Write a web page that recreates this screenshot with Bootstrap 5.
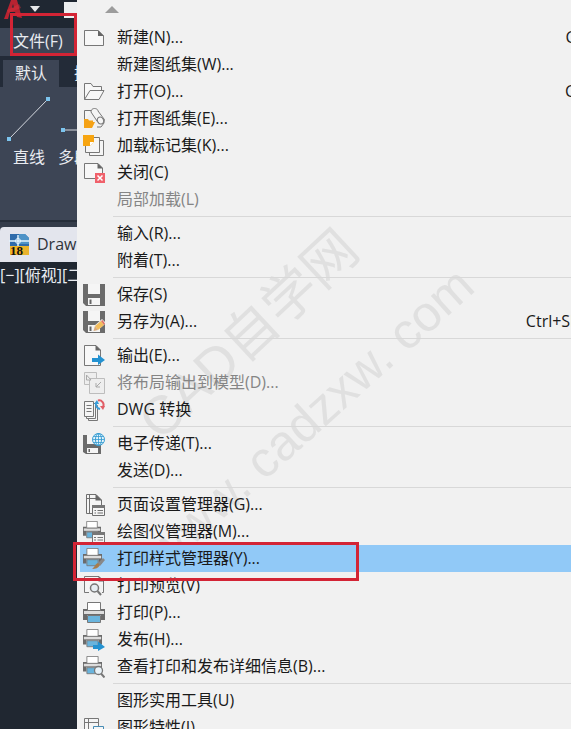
<!DOCTYPE html>
<html lang="zh-CN">
<head>
<meta charset="utf-8">
<meta name="viewport" content="width=device-width, initial-scale=1">
<title>Drawing</title>
<link href="https://cdn.jsdelivr.net/npm/bootstrap@5.3.0/dist/css/bootstrap.min.css" rel="stylesheet">
<style>
body{font-family:"Open Sans","Noto Sans CJK SC",sans-serif;font-size:16px;line-height:27px;background:#202731;color:#e8ebf0}
.cad-side{width:77px}
.cad-title{height:28px;background:#1f2732;padding-left:4px}
.cad-menubar{height:28px;background:#3c4555}
.cad-menubar button,.cad-tabs button,.cad-tool{border:0;background:none;color:inherit;padding:0}
.cad-menubar button{padding-left:13px;line-height:26px}
.mark-box{position:absolute;border:3px solid #d32435;pointer-events:none}
.mark-file{left:10px;right:0;top:-15px;bottom:0}
.mark-row{left:-7px;top:-3px;width:286px;height:39px}
.cad-tabs{height:31px;background:#232b38;padding:4px 0 0 3px}
.cad-tabs .tab-on{background:#3d4555;padding:0 12px;width:57px}
.cad-tabs .tab-off{padding-left:15px}
.cad-ribbon{height:135px;background:#3d4555;border-bottom:2px solid #262e3a}
.cad-tool{width:58px;line-height:24px}
.cad-tool svg{height:58px}
.cad-docs{height:40px;background:#343c4a;padding-top:5px}
.cad-doc{background:#e3e5ed;color:#30343b;border:0;border-radius:4px 0 0 0;padding:0 0 0 9px;gap:7px;width:120px}
.cad-menu{background:#f1f1f1;min-width:0}
.cad-list{margin:0 -42px 0 3px;position:relative}
.cad-arrow{height:24px;padding:6px 0 0 25px}
.cad-list .dropdown-item{height:27px;padding:0 0 0 3px;gap:12px;color:#1a1a1a;line-height:27px}
.cad-list .dropdown-item:disabled{color:#858585}
.cad-list .picked{background:#91c9f7}
.cad-list .dropdown-divider{margin:3px 0 3px 33px;border-top:1px solid #d8d8d8;opacity:1}
.cad-ico{width:22px;height:22px;flex:none}
.cad-water{position:absolute;left:0;top:0;width:100%;height:100%;pointer-events:none}
</style>
</head>
<body class="vh-100 overflow-hidden">
<svg class="d-none" aria-hidden="true">
<defs>
<symbol id="i-new" viewBox="0 0 22 22"><path d="M1.500 3.500H15L20.500 9V18.500H1.500Z" fill="#f7f7f7" stroke="#777"/><path d="M15 3L21 9H15Z" fill="#666"/></symbol>
<symbol id="i-open" viewBox="0 0 22 22" fill="#f7f7f7" stroke="#777"><path d="M1.500 18.500V2.500H8L10 5.500H18.500V9"/><path d="M1.500 18.500L7 9.500H21L16 18.500Z"/></symbol>
<symbol id="i-sheet" viewBox="0 0 22 22" fill="#f5f5f5" stroke="#777"><path d="M1.500 12V2.500H9M14 19H18L21 15V11"/><path d="M8 4C8-1 15 0 15 3L21 11C22 15 16 17 14 13Z"/><ellipse cx="17.500" cy="12.500" rx="3" ry="3.500" transform="rotate(-25 17.500 12.500)"/><path d="M1 19V11H5L6 12.500H10V14H12L9 20H1Z" fill="#f5a216" stroke="none"/></symbol>
<symbol id="i-markup" viewBox="0 0 22 22" fill="#f5f5f5" stroke="#777"><path d="M6.500 5.500H20.500V20.500H6.500Z"/><path d="M2.500 2.500H16.500V17.500H2.500Z"/><path d="M0 0H11V7L7 11H0Z" fill="#f7a511" stroke="none"/><path d="M11 7H7V11Z" fill="#fff" stroke="none"/></symbol>
<symbol id="i-close" viewBox="0 0 22 22"><path d="M1.500 1.500H15L19.500 6V16.500H1.500Z" fill="#f7f7f7" stroke="#777"/><path d="M14.500 1L20 6.500H14.500Z" fill="#666"/><path d="M12 11H22V21H12Z" fill="#f0616b"/><path d="M14.500 13.500L19.500 18.500M19.500 13.500L14.500 18.500" stroke="#fff" stroke-width="1.500"/></symbol>
<symbol id="i-save" viewBox="0 0 22 22"><path d="M0 0H22V22H3L0 19Z" fill="#6b6b6b"/><path d="M5 0H17V10H5Z" fill="#f5f5f5"/><path d="M5 14H17V21H5Z" fill="#f5f5f5"/><path d="M6.500 15.500H8.500V20H6.500Z" fill="#666"/></symbol>
<symbol id="i-saveas" viewBox="0 0 22 22"><use href="#i-save"/><path d="M9 21L11 15L19 8L23 12L15 19Z" fill="#f1f1f1"/><path d="M12 15L18 10L21 14L15 19Z" fill="#f3bd5c"/><path d="M18 10L19.500 9L22 12.500L21 14Z" fill="#df7165"/><path d="M12 15L10.500 20L15 19Z" fill="#d9aa79"/></symbol>
<symbol id="i-export" viewBox="0 0 22 22"><path d="M1.500 .5H13L17.500 5V20.500H1.500Z" fill="#f8f8f8" stroke="#777"/><path d="M12.500 0L18 5.500H12.500Z" fill="#666"/><path d="M9 13H15V9.500L22 15L15 20V17H9Z" fill="#2492d1"/></symbol>
<symbol id="i-layout" viewBox="0 0 22 22" fill="#eee" stroke="#bdbdbd"><path d="M1.500 .5H13.500V12.500H1.500Z"/><path d="M6.500 6.500H21.500V21.500H6.500Z"/><path d="M3.500 3V8H8ZM18 10L13 15V11M13 15H17" stroke="#a9a9a9"/></symbol>
<symbol id="i-dwg" viewBox="0 0 22 22" fill="#f5f5f5" stroke="#777"><path d="M5.500 6.500H14.500V21.500H5.500Z"/><path d="M3.500 4.500H12.500V19.500H3.500Z"/><path d="M1.500 2.500H10.500V17.500H1.500Z"/><path d="M3.500 6.500H8.500M3.500 9.500H8.500M3.500 12.500H8.500"/><path d="M13 4A5 5 0 0 0 17 10" fill="none" stroke="#3a9cd8" stroke-width="2"/><path d="M15 1.500A4.500 4.500 0 0 1 20 8" fill="none" stroke="#e15d65" stroke-width="2"/><path d="M11 5L14 1L16 5Z" fill="#3a9cd8" stroke="none"/><path d="M17 7H22L20 11Z" fill="#e15d65" stroke="none"/></symbol>
<symbol id="i-etrans" viewBox="0 0 22 22"><path d="M0 2H18V21H3L0 19Z" fill="#6b6b6b"/><path d="M4 2H14V11H4ZM4 15H15V20H4Z" fill="#f5f5f5"/><path d="M5.500 16H7V19H5.500Z" fill="#666"/><circle cx="15.500" cy="6.500" r="6" fill="#e5f4fc" stroke="#349bd0"/><path d="M9.500 6.500H21.500M11 3.500H20M11 9.500H20M15.500 .5V12.500" stroke="#349bd0" stroke-width=".8"/><ellipse cx="15.500" cy="6.500" rx="3" ry="6" fill="none" stroke="#349bd0"/></symbol>
<symbol id="i-page" viewBox="0 0 22 22" fill="#f5f5f5" stroke="#6f6f6f"><path d="M3.500 .5H13L18.500 6V19.500H3.500Z"/><path d="M6.500 1V19M4 4.500H14"/><path d="M12.500 0L19 6.500H12.500Z" fill="#666" stroke="none"/><path d="M9.500 11.500H21.500V21.500H9.500Z"/><path d="M9 11H22V14H9Z" fill="#777" stroke="none"/><path d="M11.500 16.500H13M14.500 16.500H20M11.500 19H13M14.500 19H20"/></symbol>
<symbol id="i-printer" viewBox="0 0 22 22"><path d="M0 7H22V18H18V13H4V18H0Z" fill="#6b6b6b"/><path d="M1 9H21V12H1Z" fill="#ddd"/><path d="M4.500 .5H17.500V8.500H4.500Z" fill="#fff" stroke="#777"/><path d="M4.500 13.500H17.500V20.500H4.500Z" fill="#69b4dd" stroke="#777"/></symbol>
<symbol id="i-plotter" viewBox="0 0 22 22"><use href="#i-printer" width="18" height="18"/><path d="M9.500 11.500H21.500V21.500H9.500Z" fill="#f5f5f5" stroke="#777"/><path d="M9 11H22V14H9Z" fill="#777"/><path d="M11 16.500H13M14.500 16.500H20M11 19H13M14.500 19H20" stroke="#777"/></symbol>
<symbol id="i-style" viewBox="0 0 22 22"><use href="#i-printer" width="19" height="19"/><path d="M15 15L20 10L22 12L17 18Z" fill="#888"/><path d="M15 15L17 17C15 20 13 21 9 21C12 19 12 16 15 15Z" fill="#a77d4b"/></symbol>
<symbol id="i-preview" viewBox="0 0 22 22"><path d="M1.500 1.500H16L20.500 6V17.500H1.500Z" fill="#f5f5f5" stroke="#777"/><path d="M15.500 1L21 6.500H15.500Z" fill="#666"/><path d="M6 10H19V20H6Z" fill="#f1f1f1"/><circle cx="11.500" cy="13" r="4" fill="#e6eef3" stroke="#777" stroke-width="1.500"/><path d="M14.500 16L18 20" stroke="#777" stroke-width="2"/></symbol>
<symbol id="i-publish" viewBox="0 0 22 22"><use href="#i-printer" width="19" height="19"/><path d="M10 16H15V12.500L22 18L15 22V20H10Z" fill="#2492d1"/></symbol>
<symbol id="i-details" viewBox="0 0 22 22"><use href="#i-printer" width="19" height="19"/><circle cx="15.500" cy="14.500" r="4" fill="#e8f2f8" stroke="#777" stroke-width="1.300"/><path d="M18 17.500L21.500 21.500" stroke="#777" stroke-width="2"/></symbol>
<symbol id="i-props" viewBox="0 0 22 22" fill="#f5f5f5" stroke="#777"><path d="M1.500 1.500H15.500V20.500H1.500Z"/><path d="M5.500 2V20M2 5.500H15"/><path d="M10.500 9.500H20.500V21.500H10.500Z" stroke="#478cb5"/><path d="M12 13H19M12 16H19" stroke="#478cb5"/></symbol>
</defs>
</svg>
<div class="d-flex h-100">
<aside class="cad-side flex-shrink-0 overflow-hidden text-nowrap">
  <div class="cad-title d-flex">
    <svg class="flex-shrink-0" width="100" height="22" viewBox="0 0 100 22" aria-hidden="true"><path d="M0 19L7 0H13L18 18L13 17L11 12H6L4 19ZM8 8H10L9 4Z" fill="#b82331" fill-rule="evenodd"/><path d="M3 10L15 4L17 8L4 13Z" fill="#d5313b" opacity=".5"/><path d="M26 6H36L31 12Z" fill="#e5e7ea"/><path d="M60 2H80V18H60Z" fill="#eceef0"/></svg>
  </div>
  <div class="cad-menubar position-relative"><button type="button">文件(F)</button><span class="mark-box mark-file"></span></div>
  <div class="cad-tabs d-flex"><button type="button" class="tab-on">默认</button><button type="button" class="tab-off">插入</button></div>
  <div class="cad-ribbon d-flex align-items-start">
    <button type="button" class="cad-tool flex-shrink-0"><svg class="d-block" width="58" viewBox="0 0 58 58" aria-hidden="true"><path d="M9 52L48 12" stroke="#d5d9e0"/><path d="M7 50h4v4H7zM46 10h4v4h-4z" fill="#7cc4ee"/></svg>直线</button>
    <button type="button" class="cad-tool flex-shrink-0 text-start"><svg class="d-block" width="58" viewBox="0 0 58 58" aria-hidden="true"><path d="M5 43H40" stroke="#d5d9e0"/><path d="M3 41h4v4H3z" fill="#7cc4ee"/></svg>多段线</button>
  </div>
  <div class="cad-docs d-flex"><button type="button" class="cad-doc d-flex align-items-center flex-shrink-0">
    <svg class="flex-shrink-0" width="21" height="22" viewBox="0 0 21 22" aria-hidden="true"><path d="M1 0H16L20 4V20H1Z" fill="#2f6cab"/><path d="M10 0H16L20 4V10H10Z" fill="#4e93c7"/><path d="M12 12H20V21H12Z" fill="#e9b32d"/><path d="M0 7H20M9 1V14" stroke="#e3f5ff" stroke-width="1.500"/><circle cx="9" cy="7" r="2.500" fill="none" stroke="#e3f5ff"/><path d="M1 12H14V21H1Z" fill="#efb526"/><text x="1" y="21" font-family="Liberation Serif,serif" font-weight="bold" font-size="13" fill="#111">18</text></svg>Drawing1</button></div>
  <div>[−][俯视][二维线框]</div>
</aside>
<main class="cad-menu flex-grow-1 position-relative">
  <svg class="cad-water" aria-hidden="true"><g fill="#e0e0e0" text-anchor="end" font-family="Liberation Sans,Noto Sans CJK SC,sans-serif"><text transform="translate(285 254) rotate(-43)" font-size="54">CAD自学网</text><text transform="translate(400 290) rotate(-42)" font-size="50" xml:space="preserve">www. cadzxw. com</text></g></svg>
  <div class="cad-list">
    <div class="cad-arrow d-flex"><svg width="14" height="7" aria-hidden="true"><path d="M0 7L7 0L14 7Z" fill="#9c9c9c"/></svg></div>
    <button type="button" class="dropdown-item d-flex align-items-center"><svg class="cad-ico"><use href="#i-new"/></svg>新建(N)...<span class="ms-auto">Ctrl+N</span></button>
    <button type="button" class="dropdown-item d-flex align-items-center"><span class="cad-ico"></span>新建图纸集(W)...</button>
    <button type="button" class="dropdown-item d-flex align-items-center"><svg class="cad-ico"><use href="#i-open"/></svg>打开(O)...<span class="ms-auto">Ctrl+O</span></button>
    <button type="button" class="dropdown-item d-flex align-items-center"><svg class="cad-ico"><use href="#i-sheet"/></svg>打开图纸集(E)...</button>
    <button type="button" class="dropdown-item d-flex align-items-center"><svg class="cad-ico"><use href="#i-markup"/></svg>加载标记集(K)...</button>
    <button type="button" class="dropdown-item d-flex align-items-center"><svg class="cad-ico"><use href="#i-close"/></svg>关闭(C)</button>
    <button type="button" class="dropdown-item d-flex align-items-center" disabled><span class="cad-ico"></span>局部加载(L)</button>
    <hr class="dropdown-divider">
    <button type="button" class="dropdown-item d-flex align-items-center"><span class="cad-ico"></span>输入(R)...</button>
    <button type="button" class="dropdown-item d-flex align-items-center"><span class="cad-ico"></span>附着(T)...</button>
    <hr class="dropdown-divider">
    <button type="button" class="dropdown-item d-flex align-items-center"><svg class="cad-ico"><use href="#i-save"/></svg>保存(S)</button>
    <button type="button" class="dropdown-item d-flex align-items-center"><svg class="cad-ico"><use href="#i-saveas"/></svg>另存为(A)...<span class="ms-auto">Ctrl+Shift+S</span></button>
    <hr class="dropdown-divider">
    <button type="button" class="dropdown-item d-flex align-items-center"><svg class="cad-ico"><use href="#i-export"/></svg>输出(E)...</button>
    <button type="button" class="dropdown-item d-flex align-items-center" disabled><svg class="cad-ico"><use href="#i-layout"/></svg>将布局输出到模型(D)...</button>
    <button type="button" class="dropdown-item d-flex align-items-center"><svg class="cad-ico"><use href="#i-dwg"/></svg>DWG 转换</button>
    <hr class="dropdown-divider">
    <button type="button" class="dropdown-item d-flex align-items-center"><svg class="cad-ico"><use href="#i-etrans"/></svg>电子传递(T)...</button>
    <button type="button" class="dropdown-item d-flex align-items-center"><span class="cad-ico"></span>发送(D)...</button>
    <hr class="dropdown-divider">
    <button type="button" class="dropdown-item d-flex align-items-center"><svg class="cad-ico"><use href="#i-page"/></svg>页面设置管理器(G)...</button>
    <button type="button" class="dropdown-item d-flex align-items-center"><svg class="cad-ico"><use href="#i-plotter"/></svg>绘图仪管理器(M)...</button>
    <div class="position-relative">
      <button type="button" class="dropdown-item picked d-flex align-items-center"><svg class="cad-ico"><use href="#i-style"/></svg>打印样式管理器(Y)...</button>
      <span class="mark-box mark-row z-1"></span>
    </div>
    <button type="button" class="dropdown-item d-flex align-items-center"><svg class="cad-ico"><use href="#i-preview"/></svg>打印预览(V)</button>
    <button type="button" class="dropdown-item d-flex align-items-center"><svg class="cad-ico"><use href="#i-printer"/></svg>打印(P)...</button>
    <button type="button" class="dropdown-item d-flex align-items-center"><svg class="cad-ico"><use href="#i-publish"/></svg>发布(H)...</button>
    <button type="button" class="dropdown-item d-flex align-items-center"><svg class="cad-ico"><use href="#i-details"/></svg>查看打印和发布详细信息(B)...</button>
    <hr class="dropdown-divider">
    <button type="button" class="dropdown-item d-flex align-items-center"><span class="cad-ico"></span>图形实用工具(U)</button>
    <button type="button" class="dropdown-item d-flex align-items-center"><svg class="cad-ico"><use href="#i-props"/></svg>图形特性(I)</button>
  </div>
</main>
</div>
<script src="https://cdn.jsdelivr.net/npm/bootstrap@5.3.0/dist/js/bootstrap.bundle.min.js"></script>
</body>
</html>
